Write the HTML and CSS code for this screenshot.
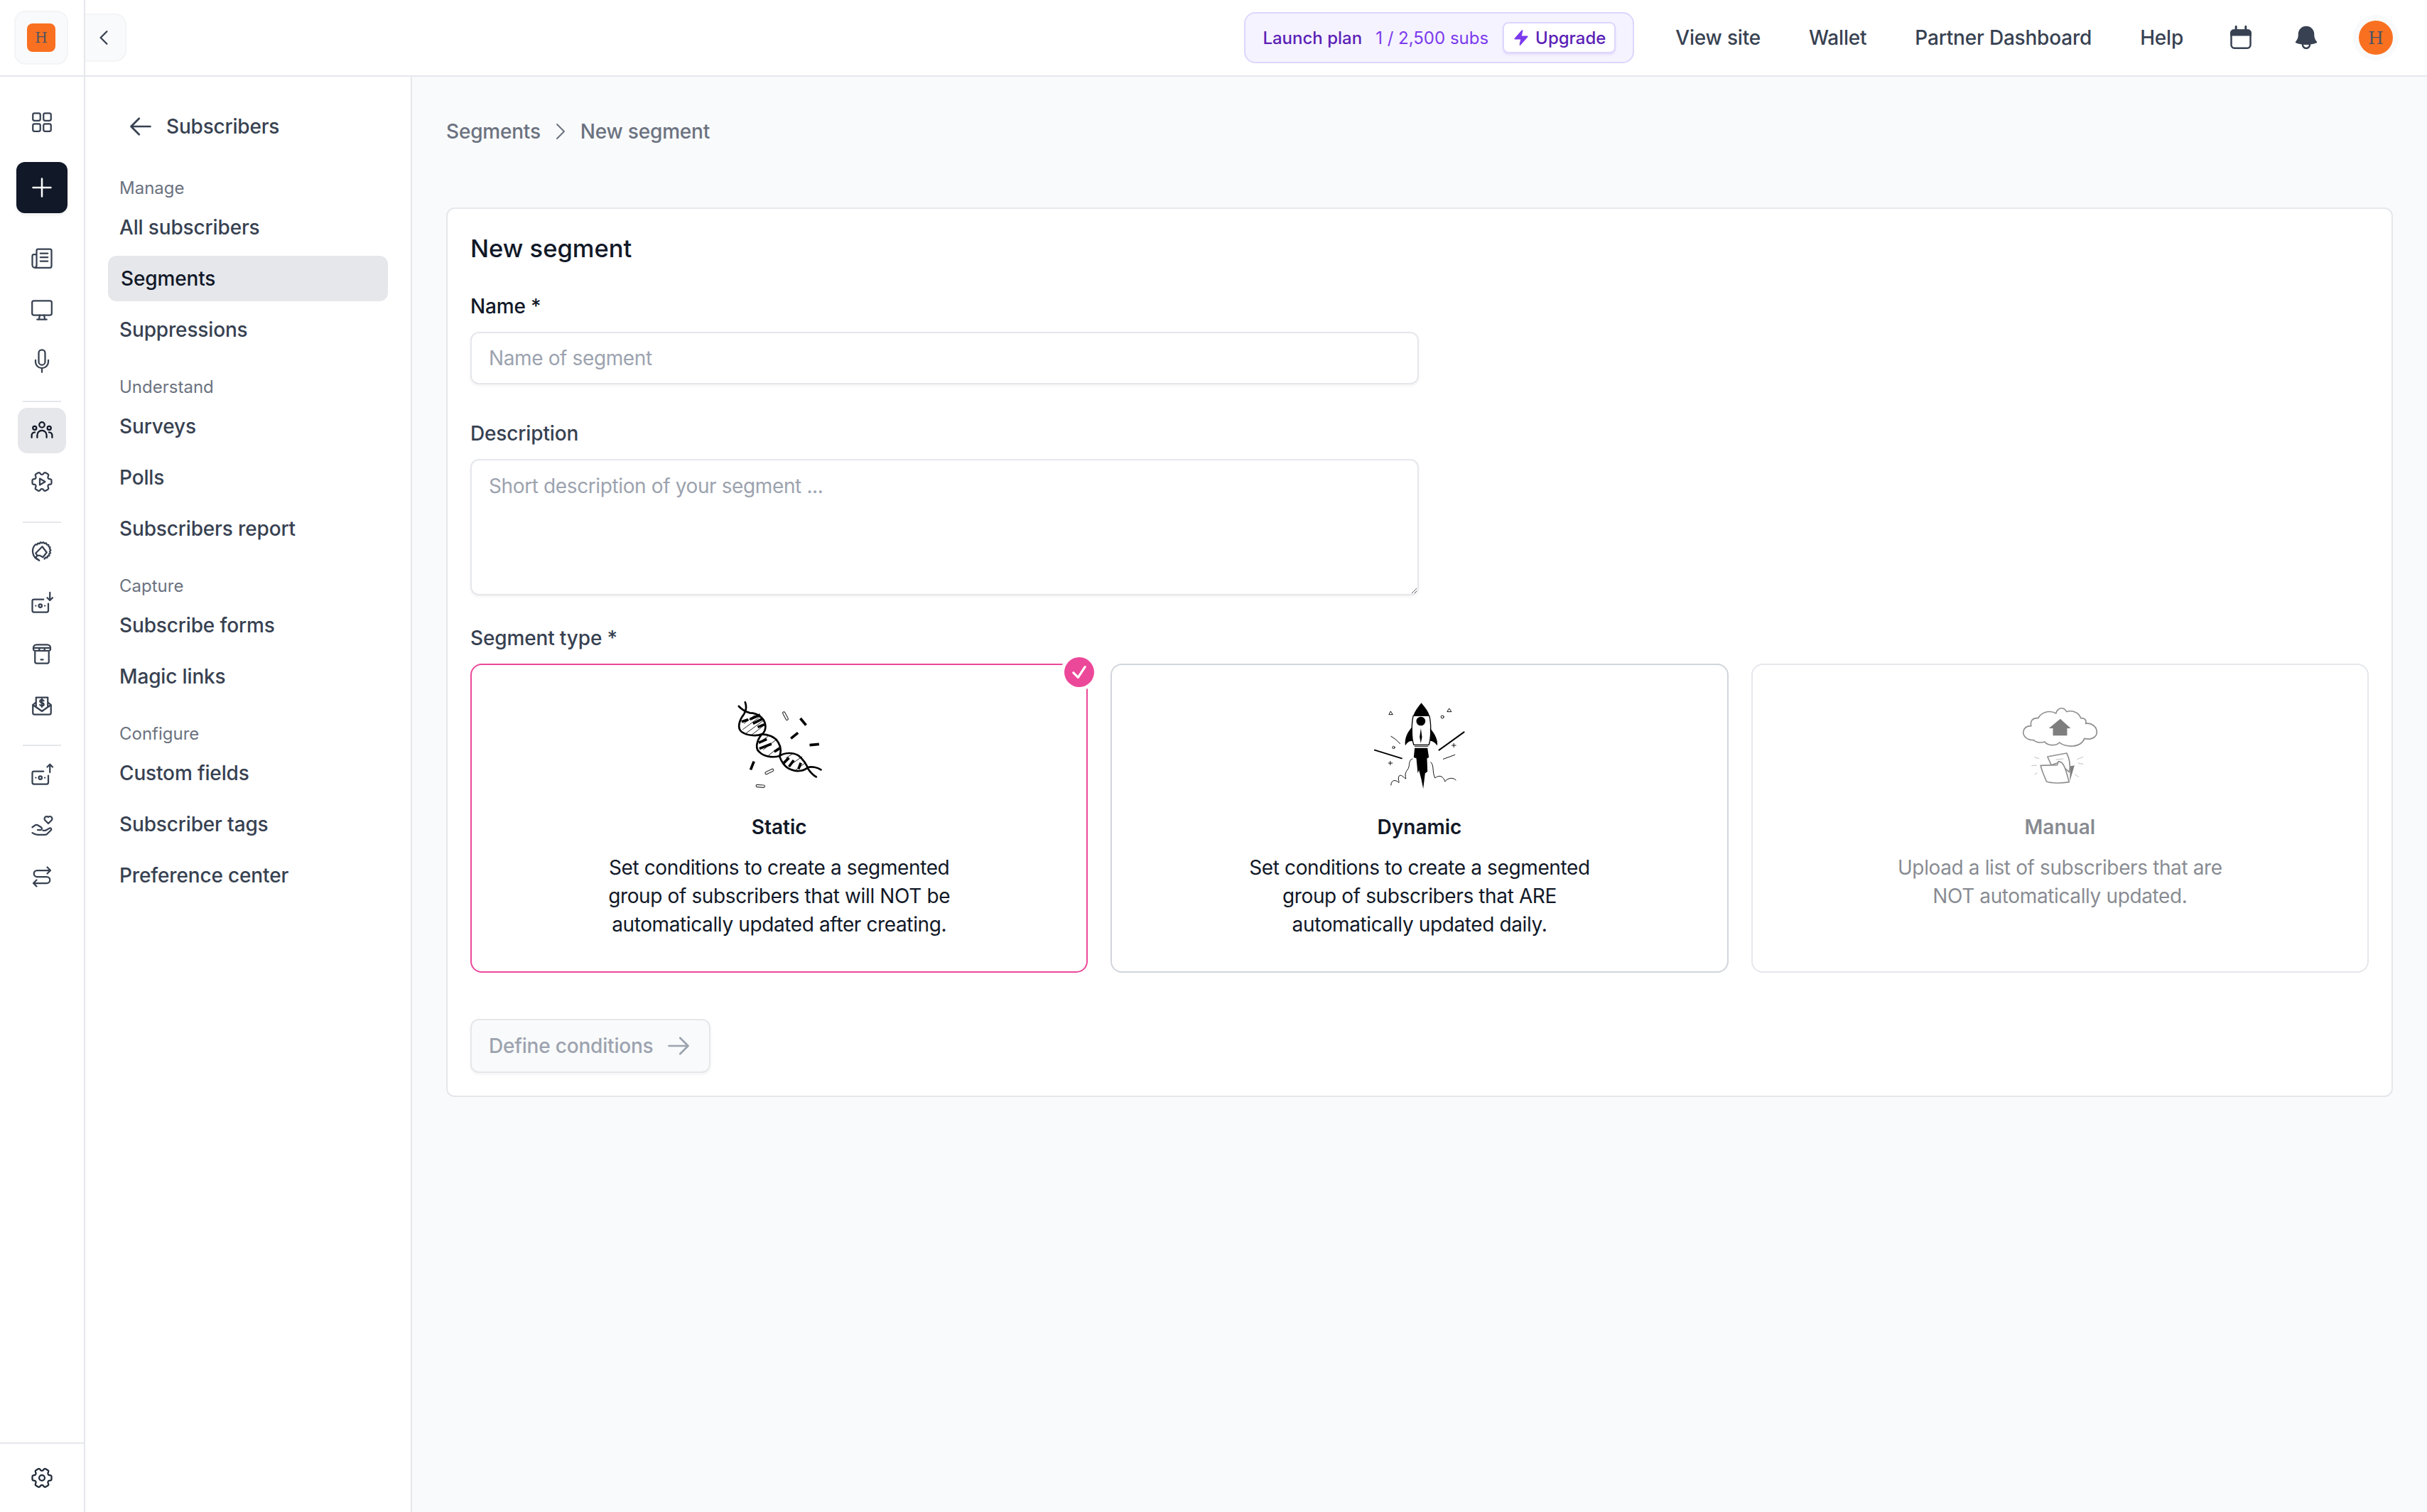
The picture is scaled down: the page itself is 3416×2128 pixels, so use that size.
FILE: index.html
```html
<!DOCTYPE html>
<html lang="en">
  <head>
    <meta charset="UTF-8" />
    <meta name="viewport" content="width=device-width, initial-scale=1.0" />
    <title>New segment</title>
    <link rel="stylesheet" href="styles.css">
  </head>
  <body>
    <header class="topbar">
      <div class="logo-cell">
        <div class="logo-box"><span class="logo-mark">H</span></div>
      </div>
      <button class="collapse-btn">
        <svg class="icon-28" viewBox="0 0 24 24"><path d="M15.75 19.5 8.25 12l7.5-7.5" /></svg>
      </button>
      <div class="top-right">
        <div class="plan-pill">
          <span class="plan-name">Launch plan</span>
          <span class="plan-subs">1 / 2,500 subs</span>
          <button class="upgrade-btn">
            <svg class="bolt" viewBox="0 0 20 20"><path d="M11.983 1.907a.75.75 0 0 0-1.292-.657l-8.5 9.5A.75.75 0 0 0 2.75 12h6.572l-1.305 6.093a.75.75 0 0 0 1.292.657l8.5-9.5A.75.75 0 0 0 17.25 8h-6.572l1.305-6.093Z" /></svg>
            Upgrade
          </button>
        </div>
        <a class="top-link first">View site</a>
        <a class="top-link">Wallet</a>
        <a class="top-link">Partner Dashboard</a>
        <a class="top-link">Help</a>
        <svg class="top-icon calendar" viewBox="0 0 24 24">
          <path class="solid" d="M7 2.6a.9.9 0 0 1 1.8 0V5h6.4V2.6a.9.9 0 0 1 1.8 0V5h1a3 3 0 0 1 3 3v2.5H3V8a3 3 0 0 1 3-3h1Z" />
          <rect x="3.9" y="5.9" width="16.2" height="14.9" rx="2.6" />
        </svg>
        <svg class="top-icon bell" viewBox="0 0 24 24"><path d="M5.25 9a6.75 6.75 0 0 1 13.5 0v.75c0 2.123.8 4.057 2.118 5.52a.75.75 0 0 1-.297 1.206c-1.544.57-3.16.99-4.831 1.243a3.75 3.75 0 1 1-7.48 0 24.585 24.585 0 0 1-4.831-1.244.75.75 0 0 1-.298-1.205A8.217 8.217 0 0 0 5.25 9.75V9Zm4.502 8.9a2.25 2.25 0 1 0 4.496 0 25.057 25.057 0 0 1-4.496 0Z" /></svg>
        <div class="avatar">H</div>
      </div>
    </header>

    <div class="layout">
      <nav class="rail">
        <div class="rail-top">
          <a class="rail-item"><svg class="icon-36" viewBox="0 0 24 24"><rect x="3.5" y="3.5" width="7" height="7" rx="1.5" /><rect x="13.5" y="3.5" width="7" height="7" rx="1.5" /><rect x="3.5" y="13.5" width="7" height="7" rx="1.5" /><rect x="13.5" y="13.5" width="7" height="7" rx="1.5" /></svg></a>
          <a class="rail-add"><svg class="icon-40" viewBox="0 0 24 24"><path d="M12 4.5v15m7.5-7.5h-15" /></svg></a>
          <a class="rail-item"><svg class="icon-36" viewBox="0 0 24 24"><path d="M7 8H4.5A1.5 1.5 0 0 0 3 9.5V18a2.5 2.5 0 0 0 2.5 2.5h14a1.5 1.5 0 0 0 1.5-1.5V4.5A1.5 1.5 0 0 0 19.5 3h-11A1.5 1.5 0 0 0 7 4.5V18a2.5 2.5 0 0 1-1.5 2.5M10.5 7h7M10.5 10.7h7M10.5 14.4h7" /></svg></a>
          <a class="rail-item"><svg class="icon-36" viewBox="0 0 24 24"><rect x="2.8" y="3.5" width="18.4" height="13.5" rx="1.6" /><path d="M10 17l-.8 4M14 17l.8 4M7.5 21h9" /></svg></a>
          <a class="rail-item"><svg class="icon-36" viewBox="0 0 24 24"><path d="M12 18.75a6 6 0 0 0 6-6v-1.5m-6 7.5a6 6 0 0 1-6-6v-1.5m6 7.5v3.75M12 15.75a3 3 0 0 1-3-3V4.5a3 3 0 1 1 6 0v8.25a3 3 0 0 1-3 3Z" /></svg></a>
          <div class="rail-divider"></div>
          <a class="rail-item active"><svg class="icon-36" viewBox="0 0 24 24"><circle cx="12" cy="6.6" r="2.5" /><circle cx="5.2" cy="9.6" r="1.7" /><circle cx="18.8" cy="9.6" r="1.7" /><path d="M7.6 18.5v-2.2a4.4 4.4 0 0 1 8.8 0v2.2M2.4 18.5v-2a3 3 0 0 1 3-3M21.6 18.5v-2a3 3 0 0 0-3-3" /></svg></a>
          <a class="rail-item"><svg class="icon-36" viewBox="0 0 24 24"><path transform="rotate(30 12 12)" d="M9.594 3.94c.09-.542.56-.94 1.11-.94h2.593c.55 0 1.02.398 1.11.94l.213 1.281c.063.374.313.686.645.87.074.04.147.083.22.127.325.196.72.257 1.075.124l1.217-.456a1.125 1.125 0 0 1 1.37.49l1.296 2.247a1.125 1.125 0 0 1-.26 1.431l-1.003.827c-.293.241-.438.613-.43.992a7.723 7.723 0 0 1 0 .255c-.008.378.137.75.43.991l1.004.827c.424.35.534.955.26 1.43l-1.298 2.247a1.125 1.125 0 0 1-1.369.491l-1.217-.456c-.355-.133-.75-.072-1.076.124a6.47 6.47 0 0 1-.22.128c-.331.183-.581.495-.644.869l-.213 1.281c-.09.543-.56.94-1.11.94h-2.594c-.55 0-1.019-.398-1.11-.94l-.213-1.281c-.062-.374-.312-.686-.644-.87a6.52 6.52 0 0 1-.22-.127c-.325-.196-.72-.257-1.076-.124l-1.217.456a1.125 1.125 0 0 1-1.369-.49l-1.297-2.247a1.125 1.125 0 0 1 .26-1.431l1.004-.827c.292-.24.437-.613.43-.991a6.932 6.932 0 0 1 0-.255c.007-.38-.138-.751-.43-.992l-1.004-.827a1.125 1.125 0 0 1-.26-1.43l1.297-2.247a1.125 1.125 0 0 1 1.37-.491l1.216.456c.356.133.751.072 1.076-.124.072-.044.146-.086.22-.128.332-.183.582-.495.644-.869l.214-1.28Z" /><path d="M10 9l5 3-5 3z" /></svg></a>
          <div class="rail-divider"></div>
          <a class="rail-item"><svg class="icon-36" viewBox="0 0 24 24"><path d="M8.5 19.8A8.8 8.8 0 0 1 6 5.5l1.4.3.8-1.4 1.5.4 1-1.3 1.4.7 1.3-.8 1 1.2 1.6-.3.6 1.5 1.6.1.1 1.6 1.4.7-.5 1.5 1.1 1.2-1 1.2.7 1.5-1.3.9.2 1.6-1.6.3-.4 1.5-1.6-.2-.9 1.3" /><path d="M12.3 7.5 16.5 13l-3.6 4.5-2.7-1.6H7.8L6.2 13.7Z" /><path d="M7.5 16 6 18l3.5 2.5" /></svg></a>
          <a class="rail-item"><svg class="icon-36" viewBox="0 0 24 24"><path d="M13.5 9H4.5A1.5 1.5 0 0 0 3 10.5v9A1.5 1.5 0 0 0 4.5 21h12a1.5 1.5 0 0 0 1.5-1.5V13M19.5 2.5V10M17 7.5l2.5 2.5L22 7.5" /><circle cx="10.5" cy="15" r="1.5" /><path d="M6.2 15h.1M14.7 15h.1" /></svg></a>
          <a class="rail-item"><svg class="icon-36" viewBox="0 0 24 24"><path d="M7 3.5h10a3 3 0 0 1 3 3v1a1.8 1.8 0 0 1-1.8 1.8H5.8A1.8 1.8 0 0 1 4 7.5v-1a3 3 0 0 1 3-3ZM9.5 9.3V6.700M14.5 9.3V6.700M4.5 6.5h15M5.5 9.3V19.5A1.5 1.5 0 0 0 7 21h10a1.5 1.5 0 0 0 1.5-1.5V9.3M11 17.5h2" /></svg></a>
          <a class="rail-item"><svg class="icon-36" viewBox="0 0 24 24"><path d="M6.5 9.5 3.5 12v7.5A1.5 1.5 0 0 0 5 21h14a1.5 1.5 0 0 0 1.5-1.5V12l-3-2.5M3.5 12l8.5 6 8.5-6M6.5 13.5V5h11v8.5" /><path d="M13.7 8.2c-.4-.6-1-.9-1.7-.9-1 0-1.8.6-1.8 1.4 0 1.9 3.600.9 3.600 2.800 0 .8-.8 1.400-1.800 1.400-.7 0-1.400-.3-1.800-.9M12 6.300v7.700" /></svg></a>
          <div class="rail-divider"></div>
          <a class="rail-item"><svg class="icon-36" viewBox="0 0 24 24"><path d="M13.5 9H4.5A1.5 1.5 0 0 0 3 10.5v9A1.5 1.5 0 0 0 4.5 21h12a1.5 1.5 0 0 0 1.5-1.5V13M19.5 10V2.5M17 5l2.5-2.500L22 5" /><circle cx="10.5" cy="15" r="1.5" /><path d="M6.2 15h.1M14.7 15h.1" /></svg></a>
          <a class="rail-item"><svg class="icon-36" viewBox="0 0 24 24"><path d="M18 10l-3-3a2.100 2.100 0 0 1 3-3 2.100 2.100 0 0 1 3 3ZM3 13.500l2.500-1.800c1-.6 1.900-.5 2.800 0l3.200 2a1.300 1.300 0 0 1-1 2.300H8M13 16.500h2.500l3.500-2c1.500-.7 2.500 1 1.300 2l-3.300 3.200c-.8.700-1.500.9-2.500.9H8c-1.800 0-3.500-.7-5-1.800" /></svg></a>
          <a class="rail-item"><svg class="icon-36" viewBox="0 0 24 24"><path d="M20 6H7.5a3 3 0 0 0 0 6h9a3 3 0 0 1 0 6H4M17 3l3 3-3 3M7 15l-3 3 3 3" /></svg></a>
        </div>
        <div class="rail-bottom">
          <a class="rail-item"><svg class="icon-36 dark" viewBox="0 0 24 24"><path transform="rotate(30 12 12)" d="M9.594 3.94c.09-.542.56-.94 1.11-.94h2.593c.55 0 1.02.398 1.11.94l.213 1.281c.063.374.313.686.645.87.074.04.147.083.22.127.325.196.72.257 1.075.124l1.217-.456a1.125 1.125 0 0 1 1.37.49l1.296 2.247a1.125 1.125 0 0 1-.26 1.431l-1.003.827c-.293.241-.438.613-.43.992a7.723 7.723 0 0 1 0 .255c-.008.378.137.75.43.991l1.004.827c.424.35.534.955.26 1.43l-1.298 2.247a1.125 1.125 0 0 1-1.369.491l-1.217-.456c-.355-.133-.75-.072-1.076.124a6.47 6.47 0 0 1-.22.128c-.331.183-.581.495-.644.869l-.213 1.281c-.09.543-.56.94-1.11.94h-2.594c-.55 0-1.019-.398-1.11-.94l-.213-1.281c-.062-.374-.312-.686-.644-.87a6.52 6.52 0 0 1-.22-.127c-.325-.196-.72-.257-1.076-.124l-1.217.456a1.125 1.125 0 0 1-1.369-.49l-1.297-2.247a1.125 1.125 0 0 1 .26-1.431l1.004-.827c.292-.24.437-.613.43-.991a6.932 6.932 0 0 1 0-.255c.007-.38-.138-.751-.43-.992l-1.004-.827a1.125 1.125 0 0 1-.26-1.43l1.297-2.247a1.125 1.125 0 0 1 1.37-.491l1.216.456c.356.133.751.072 1.076-.124.072-.044.146-.086.22-.128.332-.183.582-.495.644-.869l.214-1.28Z" /><circle cx="12" cy="12" r="2.6" /></svg></a>
        </div>
      </nav>

      <aside class="side-panel">
        <div class="side-head">
          <svg class="icon-36 arrow" viewBox="0 0 24 24"><path d="M10.5 19.5 3 12m0 0 7.5-7.5M3 12h18" /></svg>
          <span>Subscribers</span>
        </div>
        <div class="side-group">
          <div class="side-label">Manage</div>
          <a class="side-link">All subscribers</a>
          <a class="side-link current">Segments</a>
          <a class="side-link">Suppressions</a>
        </div>
        <div class="side-group">
          <div class="side-label">Understand</div>
          <a class="side-link">Surveys</a>
          <a class="side-link">Polls</a>
          <a class="side-link">Subscribers report</a>
        </div>
        <div class="side-group">
          <div class="side-label">Capture</div>
          <a class="side-link">Subscribe forms</a>
          <a class="side-link">Magic links</a>
        </div>
        <div class="side-group">
          <div class="side-label">Configure</div>
          <a class="side-link">Custom fields</a>
          <a class="side-link">Subscriber tags</a>
          <a class="side-link">Preference center</a>
        </div>
      </aside>

      <main class="content">
        <div class="breadcrumb">
          <span>Segments</span>
          <svg class="icon-32" viewBox="0 0 24 24"><path d="M8.25 4.5 15.75 12l-7.5 7.5" /></svg>
          <span>New segment</span>
        </div>

        <section class="form-card">
          <h2>New segment</h2>

          <label class="field-label name-label" for="name">Name *</label>
          <input class="text-input" id="name" type="text" placeholder="Name of segment" />

          <label class="field-label desc-label" for="description">Description</label>
          <textarea class="text-area" id="description" placeholder="Short description of your segment ..."></textarea>

          <div class="field-label type-label">Segment type *</div>
          <div class="type-grid">
            <div class="type-card selected">
              <span class="check-badge">
                <svg viewBox="0 0 24 24"><path d="m4.5 12.75 6 6 9-13.5" /></svg>
              </span>
              <svg class="art" viewBox="97.5 42 384 384">
                <g class="dna-hatch">
                  <path d="M140 145 185 110M135 170 205 118M150 185 225 130M172 193 228 150M205 225 240 200M222 255 280 210M245 278 295 240M318 290 350 270M335 320 385 285M360 340 400 310" />
                </g>
                <g class="dna-strand">
                  <path d="M145 55C152 75 150 90 140 105C120 130 110 165 130 180C150 195 190 200 215 190C195 215 185 250 205 265C225 285 260 290 290 282C295 300 310 330 340 340C365 350 395 345 410 330C425 325 450 330 465 340" />
                  <path d="M118 72C130 85 145 95 165 100C195 100 225 120 230 150C233 170 225 185 215 190C240 190 270 200 285 225C300 250 295 270 290 282C310 268 345 265 370 280C390 295 405 320 410 335C420 350 430 362 445 370" />
                </g>
                <g class="dna-rung">
                  <path d="M165 127 208 108M178 145 218 125M198 160 226 149M130 137 158 128M202 226 236 211M205 251 256 231M268 264 290 250M306 313 330 290M330 327 350 300M370 337 380 311" />
                  <path d="M378 123 402 152M338 208 368 184M417 236 457 232M182 305 168 340" />
                </g>
                <g class="dna-pill">
                  <rect x="310" y="94" width="10" height="38" rx="5" transform="rotate(-28 315 113)" />
                  <rect x="228" y="343" width="38" height="10" rx="5" transform="rotate(-26 247 348)" />
                  <rect x="191" y="404" width="37" height="10" rx="5" transform="rotate(4 210 409)" />
                </g>
              </svg>
              <h3>Static</h3>
              <p>Set conditions to create a segmented group of subscribers that will NOT be automatically updated after creating.</p>
            </div>

            <div class="type-card">
              <svg class="art" viewBox="100.5 72 384 384">
                <path class="rk-fill" d="M272 278 268 318 279 322 285 385 290 372 300 410 308 450 316 385 326 378 324 322 332 318 326 278Z" />
                <path class="rk-body" d="M266 142C258 175 258 235 268 265H332C342 235 342 175 334 142Z" />
                <path class="rk-fill" d="M300 88C285 105 272 125 266 142H334C330 125 315 105 300 88Z" />
                <circle class="rk-fill" cx="298" cy="165" r="19" />
                <path class="rk-fill" d="M298 195 293 232 298 258 303 232Z" />
                <path class="rk-fill" d="M262 190C245 205 228 235 232 268C240 255 252 245 262 250Z" />
                <path class="rk-fill" d="M337 195C355 215 372 245 367 268C358 255 348 248 338 248Z" />
                <path class="rk-line" d="M272 271H328" />
                <path class="rk-thick" d="M103 287 217 322M375 287 480 211" />
                <path class="rk-line" d="M172 229C185 236 200 248 210 260M393 325 442 307M429 267H446M437 259V275M161 342H178M169 334V350" />
                <path class="rk-line" d="M262 324C245 330 252 350 245 365C238 375 228 385 235 408C225 405 215 385 205 398C200 412 208 420 205 425C195 412 172 410 172 435M340 338C355 350 345 380 358 405C370 395 390 390 400 420C410 405 435 400 446 414" />
                <path class="rk-line" d="M170 124 163 137H178ZM417 112 409 125H426Z" />
                <circle class="rk-line" cx="389" cy="147" r="6" />
                <circle class="rk-line" cx="183" cy="276" r="5" />
              </svg>
              <h3>Dynamic</h3>
              <p>Set conditions to create a segmented group of subscribers that ARE automatically updated daily.</p>
            </div>

            <div class="type-card muted">
              <svg class="art" viewBox="103.5 42 384 384">
                <path class="cl-line" d="M232 222C215 228 195 225 185 215C160 215 140 200 142 180C145 160 160 155 175 155C170 135 180 120 205 122C215 100 250 85 280 102C285 80 310 70 325 95C345 88 375 95 385 122C405 122 410 135 405 145C430 140 455 160 452 185C450 205 425 215 400 208C395 225 375 240 350 240C330 242 305 235 295 225C280 240 245 240 232 222Z" />
                <path class="cl-fill" d="M298 125 342 165H327V196H267V165H250Z" />
                <path class="cl-fill" d="M340 325 358 322 338 390Z" />
                <path class="cl-line" d="M244 285 325 270C338 295 342 320 336 350L290 310 260 320Z" />
                <path class="cl-line" d="M215 322 285 320 290 305C310 305 320 330 335 392C300 398 260 397 240 390C230 365 220 345 215 322Z" />
                <path class="cl-thin" d="M190 287 208 293M178 323 198 321M190 360 200 354M370 296 394 286M374 312 394 316M360 360 375 370M280 297 310 294" />
              </svg>
              <h3>Manual</h3>
              <p>Upload a list of subscribers that are NOT automatically updated.</p>
            </div>
          </div>

          <button class="next-btn" disabled>
            Define conditions
            <svg class="icon-36 arrow" viewBox="0 0 24 24"><path d="M13.5 4.5 21 12m0 0-7.5 7.5M21 12H3" /></svg>
          </button>
        </section>
      </main>
    </div>
  </body>
</html>
```

FILE: styles.css
```css
* {
  box-sizing: border-box;
}

body {
  margin: 0;
  height: 2128px;
  overflow: hidden;
  background-color: #f9fafb;
  color: #374151;
  font-family: "Inter", "Liberation Sans", sans-serif;
  font-size: 28px;
}

svg {
  display: block;
  fill: none;
  stroke: currentColor;
  stroke-width: 1.5;
  stroke-linecap: round;
  stroke-linejoin: round;
}

.icon-28 {
  width: 28px;
  height: 28px;
  stroke-width: 2;
}

.icon-32 {
  width: 32px;
  height: 32px;
}

.icon-36 {
  width: 36px;
  height: 36px;
}

.icon-36.arrow {
  stroke-width: 1.8;
}

.icon-40 {
  width: 40px;
  height: 40px;
}

/* top bar */
.topbar {
  display: flex;
  align-items: center;
  height: 108px;
  background-color: #fff;
  border-bottom: 2px solid #e5e7eb;
}

.logo-cell {
  display: flex;
  align-items: center;
  justify-content: center;
  flex: none;
  width: 120px;
  height: 106px;
  border-right: 2px solid #e5e7eb;
  padding-right: 2px;
}

.logo-box {
  display: flex;
  align-items: center;
  justify-content: center;
  width: 76px;
  height: 76px;
  background-color: #f9fafb;
  border: 2px solid #f3f4f6;
  border-radius: 16px;
}

.logo-mark {
  display: flex;
  align-items: center;
  justify-content: center;
  width: 40px;
  height: 40px;
  background-color: #f97020;
  border-radius: 8px;
  color: #4b5563;
  font-family: "DejaVu Serif", serif;
  font-size: 20px;
}

.collapse-btn {
  display: flex;
  align-items: center;
  justify-content: center;
  width: 58px;
  height: 68px;
  padding: 0 4px 0 0;
  margin-top: -1px;
  background-color: #f9fafb;
  border: 2px solid #f3f4f6;
  border-left: none;
  border-radius: 0 16px 16px 0;
  color: #374151;
}

.top-right {
  display: flex;
  align-items: center;
  margin-left: auto;
  padding-right: 48px;
}

.plan-pill {
  display: flex;
  align-items: center;
  height: 72px;
  padding: 0 24px;
  background-color: #f5f3ff;
  border: 2px solid #ddd6fe;
  border-radius: 16px;
  font-size: 24px;
}

.plan-name {
  color: #5b21b6;
  font-weight: 500;
}

.plan-subs {
  margin-left: 19px;
  margin-right: 20px;
  color: #7c3aed;
}

.upgrade-btn {
  display: flex;
  align-items: center;
  gap: 8px;
  height: 44px;
  padding: 0 12px;
  background-color: #fff;
  border: 2px solid #ddd6fe;
  border-radius: 8px;
  box-shadow: 0 2px 3px rgba(91, 33, 182, 0.1);
  color: #5b21b6;
  font-family: inherit;
  font-size: 24px;
  font-weight: 500;
}

.bolt {
  width: 24px;
  height: 24px;
  fill: #7c3aed;
  stroke: none;
}

.top-link {
  margin-left: 68px;
  color: #374151;
  font-weight: 500;
  letter-spacing: -0.2px;
  line-height: 40px;
}

.top-link.first {
  margin-left: 58px;
}

.top-icon {
  flex: none;
  width: 40px;
  height: 40px;
  color: #374151;
}

.calendar {
  margin-left: 61px;
}

.calendar .solid {
  fill: currentColor;
  stroke: none;
}

.bell {
  margin-left: 52px;
  fill: currentColor;
  stroke: none;
}

.avatar {
  display: flex;
  align-items: center;
  justify-content: center;
  width: 48px;
  height: 48px;
  margin-left: 54px;
  background-color: #f97020;
  border-radius: 50%;
  box-shadow: 0 0 0 8px #f9fafb;
  color: #4b5563;
  font-family: "DejaVu Serif", serif;
  font-size: 25px;
}

/* columns under the top bar */
.layout {
  display: flex;
  height: 2020px;
}

.rail {
  display: flex;
  flex-direction: column;
  justify-content: space-between;
  flex: none;
  width: 120px;
  background-color: #fff;
  border-right: 2px solid #e5e7eb;
}

.rail-top {
  display: flex;
  flex-direction: column;
  align-items: center;
  gap: 8px;
  padding-top: 32px;
}

.rail-bottom {
  display: flex;
  justify-content: center;
  height: 98px;
  padding-top: 16px;
  border-top: 2px solid #e5e7eb;
}

.rail-item {
  display: flex;
  align-items: center;
  justify-content: center;
  width: 68px;
  height: 64px;
  border-radius: 14px;
  color: #374151;
}

.rail-item.active {
  background-color: #e5e7eb;
  color: #111827;
}

.icon-36.dark {
  color: #1f2937;
}

.rail-add {
  display: flex;
  align-items: center;
  justify-content: center;
  width: 72px;
  height: 72px;
  margin: 16px 0 24px;
  background-color: #111827;
  border-radius: 12px;
  box-shadow: 0 2px 4px rgba(0, 0, 0, 0.08);
  color: #fff;
}

.rail-divider {
  width: 54px;
  height: 2px;
  margin-top: 16px;
  background-color: #e5e7eb;
}

/* subscribers panel */
.side-panel {
  flex: none;
  width: 460px;
  padding: 50px 32px 0;
  background-color: #fff;
  border-right: 2px solid #e5e7eb;
}

.side-head {
  display: flex;
  align-items: center;
  gap: 18px;
  height: 40px;
  padding-left: 28px;
  color: #374151;
  font-weight: 500;
  letter-spacing: -0.2px;
}

.side-group {
  margin-top: 33px;
}

.side-head + .side-group {
  margin-top: 51px;
}

.side-label {
  height: 32px;
  margin-bottom: 7px;
  padding-left: 16px;
  color: #6b7280;
  font-size: 24px;
  line-height: 32px;
}

.side-link {
  display: block;
  height: 64px;
  padding-left: 16px;
  border-radius: 12px;
  color: #374151;
  font-weight: 500;
  letter-spacing: -0.15px;
  line-height: 64px;
}

.side-link + .side-link {
  margin-top: 8px;
}

.side-link.current {
  padding-left: 18px;
  background-color: #e5e7eb;
  color: #111827;
}

/* main area */
.content {
  flex: 1;
  padding: 57px 48px 0;
  min-width: 0;
}

.breadcrumb {
  display: flex;
  align-items: center;
  gap: 12px;
  height: 40px;
  color: #6b7280;
  font-weight: 500;
  letter-spacing: -0.2px;
  line-height: 40px;
}

.form-card {
  margin-top: 87px;
  padding: 32px;
  background-color: #fff;
  border: 2px solid #e5e7eb;
  border-radius: 12px;
}

.form-card h2 {
  margin: 0;
  color: #111827;
  font-size: 34.5px;
  font-weight: 500;
  line-height: 48px;
}

.field-label {
  display: block;
  color: #374151;
  font-weight: 500;
  letter-spacing: -0.15px;
  line-height: 40px;
}

.name-label {
  margin-top: 37px;
  color: #111827;
}

.desc-label {
  margin-top: 49px;
}

.type-label {
  margin-top: 40px;
}

.text-input,
.text-area {
  display: block;
  width: 1335px;
  margin-top: 16px;
  padding: 0 24px;
  background-color: #fff;
  border: 2px solid #e5e7eb;
  border-radius: 12px;
  box-shadow: 0 2px 4px rgba(0, 0, 0, 0.05);
  color: #111827;
  font-family: inherit;
  font-size: 28px;
  letter-spacing: -0.38px;
  outline: none;
}

.text-input {
  height: 74px;
}

.text-area {
  height: 192px;
  padding-top: 18px;
  line-height: 36px;
}

.text-input::placeholder,
.text-area::placeholder {
  color: #9ca3af;
  opacity: 1;
}

.type-grid {
  display: grid;
  grid-template-columns: repeat(3, 1fr);
  gap: 32px;
  margin-top: 16px;
}

.type-card {
  position: relative;
  padding: 48px 24px 46px;
  background-color: #fff;
  border: 2px solid #d1d5db;
  border-radius: 16px;
  color: #111827;
  text-align: center;
}

.type-card.selected {
  border-color: #ec4899;
}

.type-card.muted {
  border-color: #e5e7eb;
}

.type-card.muted > * {
  opacity: 0.5;
}

.art {
  width: 128px;
  height: 128px;
  margin: 0 auto;
  stroke-width: 6;
}

.type-card h3 {
  margin: 32px 0 0;
  font-size: 28px;
  font-weight: 600;
  line-height: 40px;
}

.type-card p {
  max-width: 495px;
  margin: 17px auto 0;
  font-size: 28px;
  letter-spacing: -0.38px;
  line-height: 40px;
}

.check-badge {
  position: absolute;
  top: -11px;
  right: -11px;
  display: flex;
  align-items: center;
  justify-content: center;
  width: 42px;
  height: 42px;
  background-color: #ec4899;
  border-radius: 50%;
  box-shadow: 0 0 0 5px #fff;
  color: #fff;
}

.check-badge svg {
  width: 26px;
  height: 26px;
  stroke-width: 3;
}

/* illustration strokes */
.dna-hatch {
  stroke: #000;
  stroke-width: 2.5;
}

.dna-strand {
  stroke: #000;
  stroke-width: 8;
}

.dna-rung {
  stroke: #000;
  stroke-width: 11;
  stroke-linecap: butt;
}

.dna-pill {
  fill: #fff;
  stroke: #333;
  stroke-width: 3.5;
}

.rk-fill {
  fill: #000;
  stroke: none;
}

.rk-body {
  fill: #fff;
  stroke: #000;
  stroke-width: 4;
}

.rk-thick {
  stroke: #000;
  stroke-width: 6;
}

.rk-line {
  stroke: #111;
  stroke-width: 3;
}

.cl-line {
  fill: #fff;
  stroke: #222;
  stroke-width: 5;
}

.cl-fill {
  fill: #000;
  stroke: none;
}

.cl-thin {
  stroke: #444;
  stroke-width: 2;
}

.next-btn {
  display: flex;
  align-items: center;
  gap: 18px;
  height: 76px;
  margin-top: 65px;
  padding: 0 25px 0 24px;
  background-color: #f9fafb;
  border: 2px solid #e5e7eb;
  border-radius: 12px;
  box-shadow: 0 2px 4px rgba(0, 0, 0, 0.05);
  color: #9ca3af;
  font-family: inherit;
  font-size: 28px;
  font-weight: 500;
  letter-spacing: -0.2px;
}
```
